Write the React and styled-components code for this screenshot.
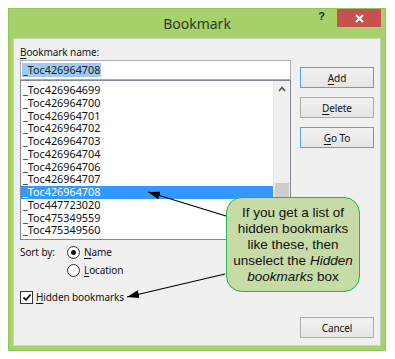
import React from 'react';
import styled, { createGlobalStyle } from 'styled-components';

const GlobalStyle = createGlobalStyle`
  html, body {
    margin: 0;
    padding: 0;
    background: #ffffff;
  }
  body {
    font-family: "Noto Sans", "DejaVu Sans", sans-serif;
  }
`;

const Page = styled.div`
  width: 395px;
  height: 359px;
  padding: 8px 0 0 8px;
  box-sizing: border-box;
`;

const Frame = styled.div`
  position: relative;
  width: 378px;
  padding: 0 5px 5px;
  box-sizing: border-box;
  background: #a6d26b;
  box-shadow: inset 0 0 0 1px #93c45a;
`;

const TitleBar = styled.div`
  height: 30px;
  display: grid;
  grid-template-columns: 1fr auto 1fr;
  align-items: center;
`;

const Title = styled.div`
  grid-column: 2;
  font-size: 14px;
  color: #2e3a22;
`;

const Controls = styled.div`
  grid-column: 3;
  justify-self: end;
  align-self: start;
  display: flex;
  align-items: center;
  gap: 12px;
  padding-top: 1px;
`;

const Help = styled.span`
  font-family: "Liberation Sans", Arial, sans-serif;
  font-weight: bold;
  font-size: 11px;
  color: #222;
  margin-top: -4px;
`;

const CloseBox = styled.div`
  width: 44px;
  height: 18px;
  background: #c75050;
  display: flex;
  align-items: center;
  justify-content: center;
`;

const Panel = styled.div`
  height: 308px;
  box-sizing: border-box;
  background: #f0f0f0;
  border: 1px solid #c9d6bb;
  padding: 6px 6px 7px;
  display: flex;
  gap: 9px;
  font-size: 10px;
  letter-spacing: -0.1px;
  color: #111;
`;

const LeftCol = styled.div`
  width: 271px;
  display: flex;
  flex-direction: column;
`;

const RightCol = styled.div`
  width: 74px;
  display: flex;
  flex-direction: column;
  gap: 9px;
  padding-top: 22px;
`;

const Label = styled.div`
  height: 15px;
  line-height: 15px;
`;

const Key = styled.u`
  text-decoration-thickness: 1px;
  text-underline-offset: 2px;
`;

const NameInput = styled.div`
  height: 20px;
  box-sizing: border-box;
  border: 1px solid #abadb3;
  background: #fff;
  display: flex;
  align-items: center;
  padding-left: 1px;
  font-size: 10.8px;
  letter-spacing: 0;
`;

const Selection = styled.span`
  background: #9fcaf1;
  color: #1a1a1a;
  line-height: 14px;
  padding: 0 1px;
`;

const ListBox = styled.div`
  height: 160px;
  box-sizing: border-box;
  border: 1px solid #828790;
  background: #fff;
  display: flex;
  font-size: 10.8px;
  letter-spacing: 0;
`;

const Rows = styled.div`
  flex: 1;
  padding-top: 3px;
`;

const Row = styled.div`
  height: 12.75px;
  line-height: 12.75px;
  padding-left: 2px;
  background: ${p => (p.$selected ? '#3399ff' : 'transparent')};
  color: ${p => (p.$selected ? '#fff' : '#111')};
`;

const ScrollBar = styled.div`
  width: 16px;
  background: #f0f0f0;
  border-left: 1px solid #e8e8e8;
  display: flex;
  flex-direction: column;
  align-items: center;
`;

const ScrollArrow = styled.div`
  height: 17px;
  display: flex;
  align-items: center;
  justify-content: center;
`;

const Track = styled.div`
  flex: 1;
  width: 100%;
  display: flex;
  flex-direction: column;
  padding-top: 85px;
  box-sizing: border-box;
`;

const Thumb = styled.div`
  height: 40px;
  margin: 0 1px;
  background: #cdcdcd;
`;

const OptionRow = styled.div`
  height: 18px;
  display: flex;
  align-items: center;
  margin-top: ${p => p.$top || 0}px;
  padding-left: ${p => p.$indent || 0}px;
`;

const SortLabel = styled.span`
  width: 47px;
`;

const Radio = styled.span`
  width: 13px;
  height: 13px;
  box-sizing: border-box;
  border-radius: 50%;
  border: 1px solid #333;
  background: #fff;
  margin-right: 4px;
  display: flex;
  align-items: center;
  justify-content: center;

  &::after {
    content: '';
    width: 5px;
    height: 5px;
    border-radius: 50%;
    background: ${p => (p.$checked ? '#111' : 'transparent')};
  }
`;

const CheckBox = styled.span`
  width: 13px;
  height: 13px;
  box-sizing: border-box;
  border: 1px solid #333;
  background: #fff;
  margin-right: 3px;
  display: flex;
  align-items: center;
  justify-content: center;
`;

const Button = styled.div`
  height: 21px;
  box-sizing: border-box;
  border: 1px solid ${p => (p.$focus ? '#5c9fe0' : '#adadad')};
  background: linear-gradient(#f1f1f1, #e6e6e6);
  display: flex;
  align-items: center;
  justify-content: center;
`;

const CancelButton = styled(Button)`
  margin-top: auto;
`;

const Callout = styled.div`
  position: absolute;
  left: 218px;
  top: 189px;
  width: 134px;
  height: 95px;
  box-sizing: border-box;
  border: 1.5px solid #27b04b;
  border-radius: 16px;
  background: #c6dba6;
  display: flex;
  align-items: center;
  justify-content: center;
  text-align: center;
  font-family: "Liberation Sans", Arial, sans-serif;
  font-size: 13.5px;
  line-height: 16px;
  color: #111;
`;

const Arrows = styled.svg`
  position: absolute;
  left: 0;
  top: 0;
  pointer-events: none;
`;

const items = [
  '_Toc426964699',
  '_Toc426964700',
  '_Toc426964701',
  '_Toc426964702',
  '_Toc426964703',
  '_Toc426964704',
  '_Toc426964706',
  '_Toc426964707',
  '_Toc426964708',
  '_Toc447723020',
  '_Toc475349559',
  '_Toc475349560',
];

const App = () => {
  return (
    <Page>
      <GlobalStyle />
      <Frame>
        <TitleBar>
          <Title>Bookmark</Title>
          <Controls>
            <Help>?</Help>
            <CloseBox>
              <svg width="9" height="9" viewBox="0 0 9 9">
                <path d="M1 1 L8 8 M8 1 L1 8" stroke="#fff" strokeWidth="2" />
              </svg>
            </CloseBox>
          </Controls>
        </TitleBar>
        <Panel>
          <LeftCol>
            <Label>
              <Key>B</Key>ookmark name:
            </Label>
            <NameInput>
              <Selection>_Toc426964708</Selection>
            </NameInput>
            <ListBox>
              <Rows>
                {items.map(it => (
                  <Row key={it} $selected={it === '_Toc426964708'}>
                    {it}
                  </Row>
                ))}
              </Rows>
              <ScrollBar>
                <ScrollArrow>
                  <svg width="8" height="6" viewBox="0 0 8 6">
                    <path d="M1 5 L4 1.5 L7 5" stroke="#555" strokeWidth="1.6" fill="none" />
                  </svg>
                </ScrollArrow>
                <Track>
                  <Thumb />
                </Track>
                <ScrollArrow>
                  <svg width="8" height="6" viewBox="0 0 8 6">
                    <path d="M1 1 L4 4.5 L7 1" stroke="#555" strokeWidth="1.6" fill="none" />
                  </svg>
                </ScrollArrow>
              </ScrollBar>
            </ListBox>
            <OptionRow $top={3}>
              <SortLabel>Sort by:</SortLabel>
              <Radio $checked />
              <span>
                <Key>N</Key>ame
              </span>
            </OptionRow>
            <OptionRow $indent={47}>
              <Radio />
              <span>
                <Key>L</Key>ocation
              </span>
            </OptionRow>
            <OptionRow $top={9}>
              <CheckBox>
                <svg width="10" height="9" viewBox="0 0 10 9">
                  <path d="M1.5 4.5 L4 7 L8.5 1.5" stroke="#111" strokeWidth="1.8" fill="none" />
                </svg>
              </CheckBox>
              <span>
                <Key>H</Key>idden bookmarks
              </span>
            </OptionRow>
          </LeftCol>
          <RightCol>
            <Button $focus>
              <span>
                <Key>A</Key>dd
              </span>
            </Button>
            <Button>
              <span>
                <Key>D</Key>elete
              </span>
            </Button>
            <Button $focus>
              <span>
                <Key>G</Key>o To
              </span>
            </Button>
            <CancelButton>Cancel</CancelButton>
          </RightCol>
        </Panel>

        <Arrows width="378" height="343" viewBox="0 0 378 343">
          <defs>
            <marker
              id="head"
              viewBox="0 0 12 8"
              refX="12"
              refY="4"
              markerWidth="12"
              markerHeight="8"
              markerUnits="userSpaceOnUse"
              orient="auto"
            >
              <path d="M0 0 L12 4 L0 8 Z" fill="#000" />
            </marker>
          </defs>
          <line x1="218" y1="208" x2="140" y2="184" stroke="#000" strokeWidth="1.2" markerEnd="url(#head)" />
          <line x1="217" y1="266" x2="119" y2="289" stroke="#000" strokeWidth="1.2" markerEnd="url(#head)" />
        </Arrows>

        <Callout>
          <div>
            If you get a list of
            <br />
            hidden bookmarks
            <br />
            like these, then
            <br />
            unselect the <i>Hidden</i>
            <br />
            <i>bookmarks</i> box
          </div>
        </Callout>
      </Frame>
    </Page>
  );
};

export default App;
